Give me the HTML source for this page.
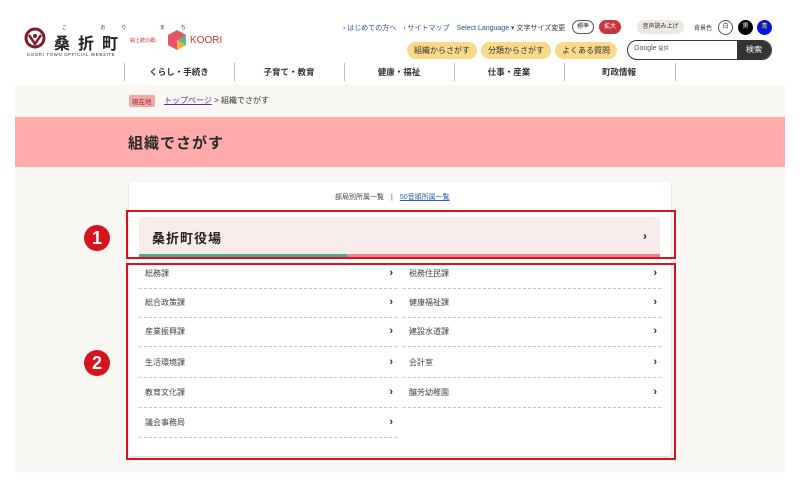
<!DOCTYPE html>
<html><head><meta charset="utf-8"><style>
*{margin:0;padding:0;box-sizing:border-box}
body{width:800px;height:485px;background:#fff;font-family:"Liberation Sans","Noto Sans CJK JP",sans-serif;position:relative;overflow:hidden;color:#333}
.a{position:absolute}
.pill{position:absolute;height:17px;border-radius:9px;background:#fbd98a;font-size:8px;text-align:center;line-height:17px;color:#333}
.nav{position:absolute;top:66px;font-size:8.5px;font-weight:bold;text-align:center;width:110px}
.sep{position:absolute;top:63px;width:1px;height:18px;background:#bbb}
.row{position:absolute;height:29px;font-size:8px;color:#444;border-bottom:1px dashed #c8c8c8;line-height:27px;padding-left:6px}
.row span{position:absolute;right:4px;top:0;font-size:11px;font-weight:bold;color:#333}
</style></head><body>
<svg class="a" style="left:24px;top:27px" width="22" height="22" viewBox="0 0 22 22"><circle cx="11" cy="11" r="9" fill="none" stroke="#7a1f2b" stroke-width="3"/><path d="M5 8 L11 17 L17 8" fill="none" stroke="#7a1f2b" stroke-width="2.5"/><circle cx="11" cy="9" r="2" fill="#7a1f2b"/></svg>
<div class="a" style="left:62px;top:24px;font-size:5px;letter-spacing:16px;white-space:nowrap">こ おり まち</div>
<div class="a" style="left:54px;top:30px;font-size:16px;font-weight:bold;letter-spacing:8px;color:#222">桑折町</div>
<div class="a" style="left:27px;top:52px;font-size:4.5px;letter-spacing:.6px;white-space:nowrap">KOORI TOWN OFFICIAL WEBSITE</div>
<div class="a" style="left:130px;top:37px;font-size:5px;color:#c33">絹上統の郷。</div>
<svg class="a" style="left:168px;top:30px" width="18" height="20" viewBox="0 0 18 20"><polygon points="9,0 18,5 18,15 9,20 0,15 0,5" fill="#e8556a"/><polygon points="9,10 18,5 18,15 9,20" fill="#5cb88a"/><polygon points="9,10 18,15 9,20" fill="#f3b33d"/></svg>
<div class="a" style="left:190px;top:35px;font-size:10px;color:#d33">KOORI</div>
<div class="a" style="left:343px;top:23px;font-size:7px;color:#2a4f9e;white-space:nowrap">› はじめての方へ　› サイトマップ　Select Language ▾ <span style="color:#333">文字サイズ変更</span></div>
<div class="a" style="left:572px;top:20px;width:22px;height:14px;border:1px solid #555;border-radius:7px;font-size:6px;text-align:center;line-height:12px">標準</div>
<div class="a" style="left:599px;top:20px;width:22px;height:14px;background:#c9353c;color:#fff;border-radius:7px;font-size:6px;text-align:center;line-height:14px">拡大</div>
<div class="a" style="left:637px;top:20px;width:47px;height:14px;background:#ece9e0;border-radius:7px;font-size:6px;text-align:center;line-height:14px">音声読み上げ</div>
<div class="a" style="left:694px;top:23px;font-size:6px">背景色</div>
<div class="a" style="left:718px;top:20px;width:15px;height:15px;border:1px solid #555;border-radius:50%;font-size:6px;text-align:center;line-height:13px">白</div>
<div class="a" style="left:738px;top:20px;width:15px;height:15px;background:#000;color:#fff;border-radius:50%;font-size:6px;text-align:center;line-height:15px">黒</div>
<div class="a" style="left:757px;top:20px;width:15px;height:15px;background:#0a14e0;color:#ff0;border-radius:50%;font-size:6px;text-align:center;line-height:15px">青</div>
<div class="pill" style="left:407px;top:42px;width:70px">組織からさがす</div>
<div class="pill" style="left:481px;top:42px;width:70px">分類からさがす</div>
<div class="pill" style="left:555px;top:42px;width:62px">よくある質問</div>
<div class="a" style="left:627px;top:40px;width:145px;height:20px;border:1.5px solid #333;border-radius:10px;background:#fff;overflow:hidden"><span style="position:absolute;left:6px;top:4px;font-size:7px;color:#555">Google <span style="font-size:5px">提供</span></span><div style="position:absolute;right:0;top:0;width:34px;height:20px;background:#333;color:#fff;font-size:8px;text-align:center;line-height:18px">検索</div></div>
<div class="sep" style="left:124px"></div><div class="sep" style="left:234px"></div><div class="sep" style="left:344px"></div><div class="sep" style="left:454px"></div><div class="sep" style="left:564px"></div><div class="sep" style="left:675px"></div>
<div class="nav" style="left:124px">くらし・手続き</div>
<div class="nav" style="left:234px">子育て・教育</div>
<div class="nav" style="left:344px">健康・福祉</div>
<div class="nav" style="left:454px">仕事・産業</div>
<div class="nav" style="left:564px">町政情報</div>
<div class="a" style="left:15px;top:85px;width:770px;height:387px;background:#f8f7f3"></div>
<div class="a" style="left:129px;top:95px;background:#f6a6a6;color:#833;font-size:6.5px;padding:1px 3px;border-radius:2px">現在地</div>
<div class="a" style="left:164px;top:95px;font-size:8px"><span style="color:#6a2a9e;text-decoration:underline">トップページ</span> &gt; 組織でさがす</div>
<div class="a" style="left:15px;top:117px;width:770px;height:50px;background:#ffabab"></div>
<div class="a" style="left:128px;top:132px;font-size:15px;font-weight:bold;color:#2a2a2a;letter-spacing:1px">組織でさがす</div>
<div class="a" style="left:129px;top:182px;width:542px;height:274px;background:#fff;border-radius:3px;box-shadow:0 1px 2px rgba(0,0,0,.15)"></div>
<div class="a" style="left:335px;top:192px;font-size:7px;color:#444">部局別所属一覧　|　<span style="color:#2a5fb0;text-decoration:underline">50音順所属一覧</span></div>
<div class="a" style="left:139px;top:217px;width:521px;height:39px;background:#f8ecea;border-radius:3px 3px 0 0"></div>
<div class="a" style="left:139px;top:254px;width:208px;height:3px;background:#4aa98e"></div>
<div class="a" style="left:347px;top:254px;width:313px;height:3px;background:#ec8585"></div>
<div class="a" style="left:152px;top:228px;font-size:13px;font-weight:bold;color:#222;letter-spacing:1px">桑折町役場</div>
<div class="a" style="left:643px;top:229px;font-size:12px;font-weight:bold">›</div>
<div class="row" style="left:139px;top:260px;width:258px">総務課<span>›</span></div>
<div class="row" style="left:139px;top:289px;width:258px">総合政策課<span>›</span></div>
<div class="row" style="left:139px;top:318px;width:258px">産業振興課<span>›</span></div>
<div class="row" style="left:139px;top:349px;width:258px">生活環境課<span>›</span></div>
<div class="row" style="left:139px;top:379px;width:258px">教育文化課<span>›</span></div>
<div class="row" style="left:139px;top:409px;width:258px">議会事務局<span>›</span></div>
<div class="row" style="left:403px;top:260px;width:258px">税務住民課<span>›</span></div>
<div class="row" style="left:403px;top:289px;width:258px">健康福祉課<span>›</span></div>
<div class="row" style="left:403px;top:318px;width:258px">建設水道課<span>›</span></div>
<div class="row" style="left:403px;top:349px;width:258px">会計室<span>›</span></div>
<div class="row" style="left:403px;top:379px;width:258px">醸芳幼稚園<span>›</span></div>
<div class="a" style="left:126px;top:210px;width:550px;height:49px;border:2px solid #d7141e"></div>
<div class="a" style="left:126px;top:263px;width:550px;height:197px;border:2px solid #d7141e"></div>
<div class="a" style="left:84px;top:225px;width:26px;height:26px;border-radius:50%;background:#d7141e;color:#fff;font-size:18px;font-weight:bold;text-align:center;line-height:26px">1</div>
<div class="a" style="left:84px;top:350px;width:26px;height:26px;border-radius:50%;background:#d7141e;color:#fff;font-size:18px;font-weight:bold;text-align:center;line-height:26px">2</div>
</body></html>
